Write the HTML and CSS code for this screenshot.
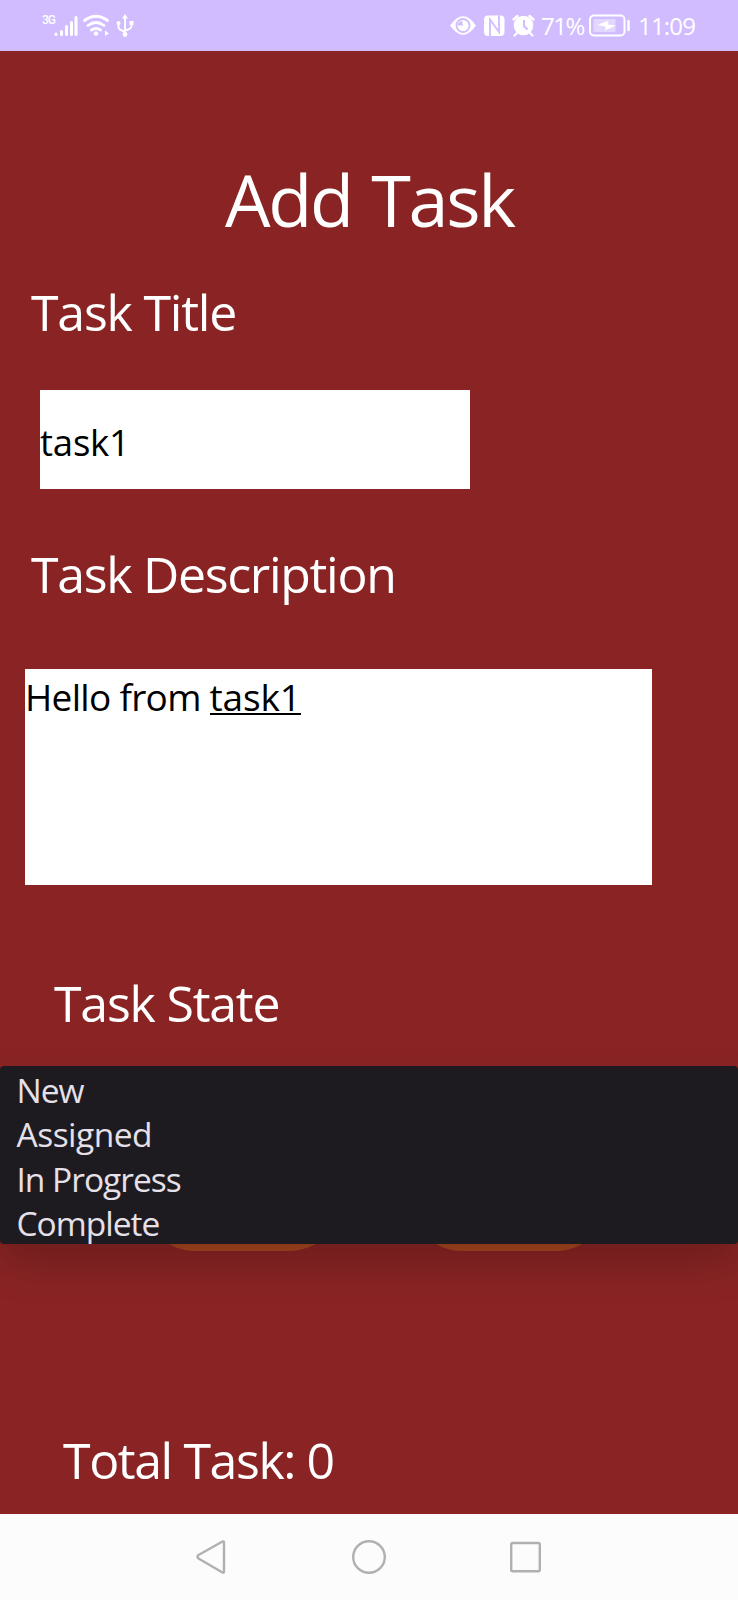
FILE: index.html
```html
<!DOCTYPE html>
<html lang="en">
<head>
<meta charset="utf-8">
<title>Add Task</title>
<link rel="stylesheet" href="styles.css">
</head>
<body>
<div class="screen">
  <header class="status">
    <svg class="status-left" width="110" height="51" viewBox="0 0 110 51" fill="none" stroke="#fff" stroke-linecap="round">
      <g stroke-width="3"><path d="M26 34.5v-.5M31.500 34.500v-3M36.500 34.500v-8M41.500 34.500v-12M46 34.500v-17"/></g>
      <g stroke-width="2.800"><path d="M54.500 20.500q11.500-8.500 23 0M58 25.500q8-6 16 0M61.500 30q4.500-3 9 0"/></g>
      <circle cx="66" cy="33.500" r="2.200" fill="#fff" stroke="none"/>
      <path d="M75 30.500v5.500l4-2.700z" fill="#fff" stroke="none"/>
      <g stroke-width="1.900"><path d="M95 17v18M88.500 24v3q0 3 6.500 4.500M101.500 23v3q0 3-6.500 4.500"/></g>
      <g fill="#fff" stroke="none"><path d="M95 14l3 4.500h-6z"/><circle cx="88.500" cy="23" r="2"/><path d="M99.500 21h4v4h-4z"/><circle cx="95" cy="34.500" r="2.400"/></g>
    </svg>
    <span class="net">3G</span>
    <div class="status-right">
      <svg width="90" height="51" viewBox="0 0 90 51">
        <path d="M0 25.500Q13 7 26 25.500Q13 44 0 25.500z" fill="#fff"/>
        <circle cx="13" cy="25.500" r="6.500" fill="none" stroke="#d0bcff" stroke-width="1.800"/>
        <path d="M13 25.500l-1-4.500a4.500 4.500 0 0 0-4 4.500z" fill="#d0bcff"/>
        <rect x="34" y="15.500" width="20.500" height="20.500" rx="4" fill="#fff"/>
        <path d="M40 36V19.500l9 12.500V15.500" fill="none" stroke="#d0bcff" stroke-width="1.800"/>
        <circle cx="73.500" cy="25.500" r="9.800" fill="#fff"/>
        <path d="M63.500 19.500l4-3.500M83.500 19.500l-4-3.500M67 33l-2.500 2.500M80 33l2.500 2.500" stroke="#fff" stroke-width="2.400" stroke-linecap="round"/>
        <path d="M74 20v6l3.500 3.500" fill="none" stroke="#d0bcff" stroke-width="2"/>
      </svg>
      <span class="pct">71%</span>
      <svg class="battery" width="42" height="51" viewBox="0 0 42 51">
        <rect x="1" y="15.500" width="34.500" height="20" rx="4" fill="none" stroke="#fff" stroke-width="2"/>
        <rect x="4.500" y="19" width="22" height="13" fill="#fff" opacity=".4"/>
        <path d="M8.500 25l11-4.500-.5 4 8 1-11 5 .5-4z" fill="#fff"/>
        <path d="M39.500 21v9" stroke="#fff" stroke-width="2.400" stroke-linecap="round"/>
      </svg>
      <span class="clock">11:09</span>
    </div>
  </header>

  <main class="content">
    <h1 class="title">Add Task</h1>
    <div class="label label-title">Task Title</div>
    <div class="field field-title">task1</div>
    <div class="label label-desc">Task Description</div>
    <div class="field field-desc">Hello from <span class="composing">task1</span></div>
    <div class="label label-state">Task State</div>
    <div class="buttons"><span class="pill"></span><span class="pill"></span></div>
    <div class="label label-total">Total Task: 0</div>
    <ul class="menu">
      <li class="new">New</li>
      <li class="assigned">Assigned</li>
      <li class="progress">In Progress</li>
      <li class="complete">Complete</li>
    </ul>
  </main>

  <nav class="nav">
    <svg width="738" height="86" viewBox="0 0 738 86" fill="none" stroke="#b0b0b0" stroke-width="2.400" stroke-linejoin="round">
      <path d="M197.500 43Q197 42 198.500 41L222.500 27.500Q224 27 224 28.500V57.500Q224 59 222.500 58.500L198.500 44.500Z"/>
      <circle cx="369" cy="43" r="15.800"/>
      <rect x="511.200" y="29" width="28.600" height="28.300" rx="1.500"/>
    </svg>
  </nav>
</div>
</body>
</html>
```
FILE: styles.css
```css
* { box-sizing: border-box; }
body { margin: 0; font-family: "Open Sans", "Noto Sans", sans-serif; }
.screen { width: 738px; height: 1600px; display: flex; flex-direction: column; overflow: hidden; background: #8a2424; }

.status { position: relative; height: 51px; flex: none; display: flex; justify-content: space-between; background: #d0bcff; color: #fff; padding: 0 42px 0 30px; }
.net { position: absolute; left: 42px; top: 13px; font: 500 12px/14px Roboto, sans-serif; letter-spacing: -1px; }
.status-right { display: flex; font-size: 24px; line-height: 52px; white-space: nowrap; }
.pct { width: 44px; margin-left: 1px; letter-spacing: -1.5px; }
.battery { margin-left: 4px; }
.clock { width: 58px; margin-left: 7px; letter-spacing: -0.8px; }

.content { position: relative; height: 1463px; display: flex; flex-direction: column; align-items: flex-start; color: #fff; padding-top: 108px; white-space: nowrap; }
.title { margin: 0 0 0 225px; font-size: 72px; line-height: 80px; font-weight: 400; letter-spacing: -2.300px; word-spacing: 3px; }
.label { font-size: 50px; line-height: 60px; letter-spacing: -1.200px; }
.label-title { margin: 43px 0 0 31px; }
.field { background: #fff; color: #000; }
.field-title { margin: 48px 0 0 40px; width: 430px; height: 99px; padding-top: 3px; font-size: 36.500px; line-height: 99px; letter-spacing: -0.2px; }
.label-desc { margin: 55px 0 0 31px; letter-spacing: -1.300px; }
.field-desc { margin: 65px 0 0 25px; width: 627px; height: 216px; padding-top: 4px; font-size: 37px; line-height: 48px; letter-spacing: -0.7px; }
.composing { display: inline-block; height: 42px; border-bottom: 2px solid #000; letter-spacing: -0.2px; }
.label-state { margin: 88px 0 0 54px; }
.buttons { display: flex; gap: 75px; margin: 122px 0 0 146px; }
.pill { width: 192px; height: 96px; border-radius: 48px; background: #a7461f; }
.label-total { margin: 179px 0 0 63px; letter-spacing: -1.400px; }

.menu { position: absolute; left: 0; top: 1015px; width: 738px; height: 178px; margin: 0; padding: 2px 0 0 16.500px; list-style: none; background: #1d1b20; color: #e6e0e9; border-radius: 4px; box-shadow: 0 20px 40px rgba(0, 0, 0, .2); font-size: 33.500px; line-height: 44.400px; letter-spacing: -1px; }
.assigned { letter-spacing: -0.500px; }

.nav { height: 86px; flex: none; background: #fcfcfc; }
.nav svg { display: block; }
```
